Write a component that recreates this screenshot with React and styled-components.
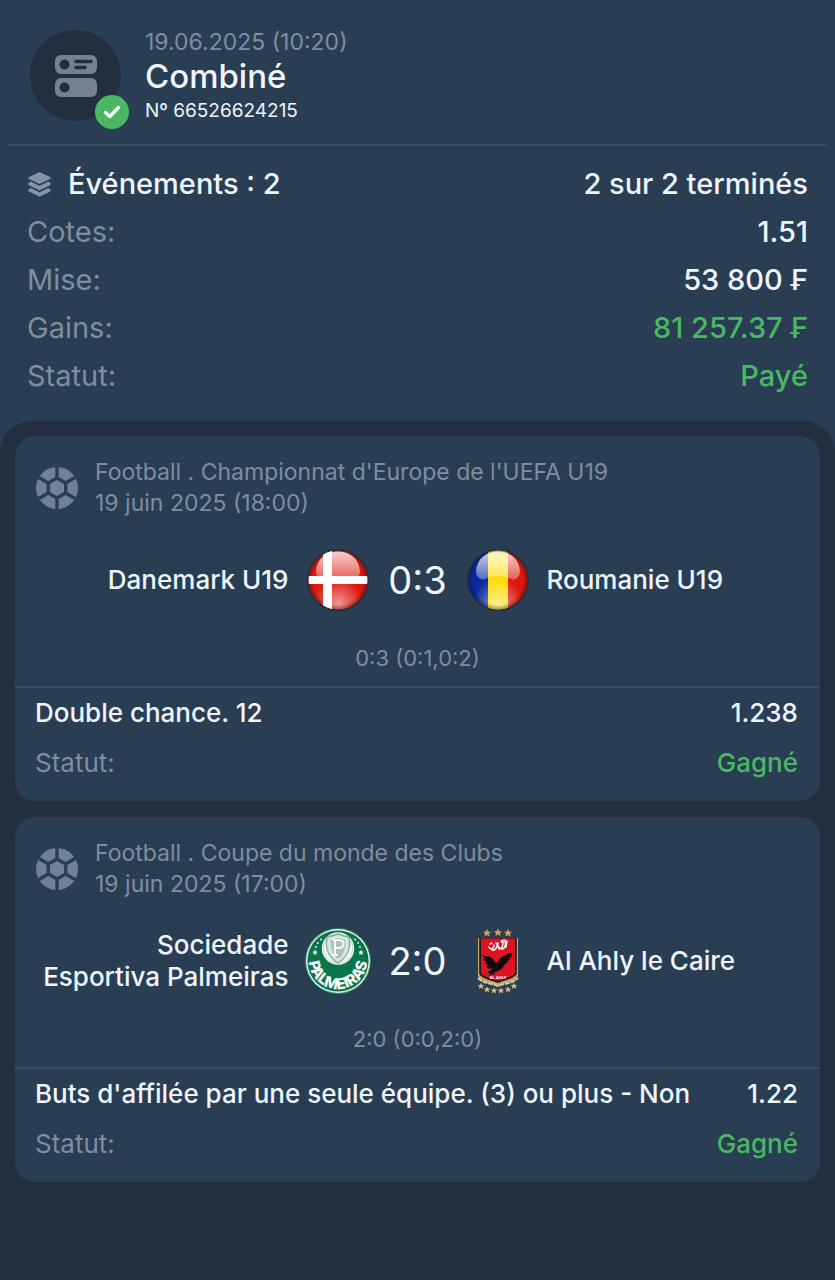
import React from 'react';
import styled, { createGlobalStyle } from 'styled-components';

const GlobalStyle = createGlobalStyle`
    * {
        box-sizing: border-box;
    }
    body {
        margin: 0;
        background: #232f3e;
        color: #eef5ff;
        font-family: Inter, 'Liberation Sans', sans-serif;
    }
    h1, h2, p, dl, dt, dd {
        margin: 0;
        font-weight: 400;
    }
`;

const Page = styled.main`
    min-height: 100vh;
    display: flex;
    flex-direction: column;
    background: #293d53;
`;
const Header = styled.header`
    display: flex;
    align-items: flex-start;
    gap: 24px;
    margin: 0 8px;
    padding: 26px 22px 16px;
    border-bottom: 2px solid #384d64;
`;
const TypeBadge = styled.div`
    position: relative;
    width: 91px;
    height: 91px;
    margin-top: 4px;
    display: flex;
    align-items: center;
    justify-content: center;
    border-radius: 50%;
    background: #232f3e;
`;
const CheckBadge = styled.span`
    position: absolute;
    right: -8px;
    bottom: -8px;
    width: 34px;
    height: 34px;
    display: flex;
    align-items: center;
    justify-content: center;
    border-radius: 50%;
    background: #4bb664;
`;
const HeaderDate = styled.p`
    color: #7f8da0;
    font-size: 23px;
    line-height: 32px;
`;
const HeaderTitle = styled.h1`
    && {
        font-weight: 500;
    }
    font-size: 33px;
    line-height: 36px;
`;
const HeaderNumber = styled.p`
    font-size: 19px;
    line-height: 34px;
`;
const Summary = styled.dl`
    padding: 14px 27px 21px;
    font-size: 29px;
    line-height: 48px;
`;
const SummaryRow = styled.div`
    display: flex;
    justify-content: space-between;
    dt {
        display: flex;
        align-items: center;
        gap: 16px;
        color: ${({ $strong }) => ($strong ? '#eef5ff' : '#7f8da0')};
        font-weight: ${({ $strong }) => ($strong ? 500 : 400)};
    }
    dd {
        color: ${({ $green }) => ($green ? '#4bb664' : '#eef5ff')};
        font-weight: 500;
    }
`;
const EventList = styled.section`
    flex: 1;
    display: flex;
    flex-direction: column;
    gap: 16px;
    padding: 15px 15px 32px;
    border-radius: 32px 32px 0 0;
    background: #232f3e;
`;
const Card = styled.article`
    padding: 21px 0 13px;
    border-radius: 20px;
    background: #293d53;
`;
const CardHead = styled.div`
    display: flex;
    align-items: center;
    gap: 16px;
    padding: 0 20px;
    color: #7f8da0;
    font-size: 23px;
    line-height: 31px;
`;
const Match = styled.div`
    display: grid;
    grid-template-columns: 1fr 66px 94px 66px 1fr;
    align-items: center;
    margin-top: 28px;
    padding: 0 8px;
    min-height: 66px;
`;
const Team = styled.h2`
    && {
        font-weight: 500;
    }
    padding: 0 16px;
    font-size: 26px;
    line-height: 32px;
    text-align: ${({ $side }) => ($side === 'home' ? 'right' : 'left')};
`;
const Score = styled.p`
    font-size: 38px;
    line-height: 48px;
    text-align: center;
`;
const Periods = styled.p`
    padding: 29px 20px 12px;
    border-bottom: 2px solid #384d64;
    color: #7f8da0;
    font-size: 22px;
    line-height: 32px;
    text-align: center;
`;
const BetRow = styled.div`
    display: flex;
    justify-content: space-between;
    padding: 0 22px 0 20px;
    font-size: 26px;
    line-height: 50px;
    dt {
        color: ${({ $muted }) => ($muted ? '#7f8da0' : '#eef5ff')};
        font-weight: ${({ $muted }) => ($muted ? 400 : 500)};
    }
    dd {
        color: ${({ $green }) => ($green ? '#4bb664' : '#eef5ff')};
        font-weight: 500;
    }
`;

const ComboIcon = () => (
    <svg width="42" height="42" viewBox="0 0 42 42" aria-hidden="true">
        <rect width="42" height="19" rx="6" fill="#748191" />
        <rect y="23" width="42" height="19" rx="6" fill="#748191" />
        <circle cx="9.5" cy="9.5" r="5" fill="#232f3e" />
        <circle cx="9.5" cy="32.5" r="5" fill="#232f3e" />
        <path
            d="M21 6.5H36M21 12.5H30"
            stroke="#232f3e"
            strokeWidth="3.6"
            strokeLinecap="round"
        />
    </svg>
);

const CheckIcon = () => (
    <svg width="18" height="14" viewBox="0 0 18 14" aria-hidden="true">
        <path
            d="M2.5 7.5L6.8 11.5L15.5 2.5"
            fill="none"
            stroke="#fff"
            strokeWidth="3.4"
            strokeLinecap="round"
            strokeLinejoin="round"
        />
    </svg>
);

const LayersIcon = () => (
    <svg width="25" height="25" viewBox="0 0 25 25" aria-hidden="true">
        <g fill="#8794a7" stroke="#8794a7" strokeLinejoin="round">
            <path d="M12.5 1L23 6L12.5 11L2 6Z" strokeWidth="1.8" />
            <path
                d="M2 11.3L4 10.4L12.5 14.5L21 10.4L23 11.3L23 12.6L12.5 17.6L2 12.6Z"
                strokeWidth="1.2"
            />
            <path
                d="M2 17.8L4 16.9L12.5 21L21 16.9L23 17.8L23 19L12.5 24L2 19Z"
                strokeWidth="1.2"
            />
        </g>
    </svg>
);

const BallIcon = () => (
    <svg width="44" height="44" viewBox="0 0 44 44" aria-hidden="true">
        <circle cx="22" cy="22" r="21" fill="#718096" />
        <g stroke="#293d53" strokeWidth="3.4" strokeLinejoin="round">
            <path
                d="M22 0V12M22 32V44M13.3 17L4 11.5M30.7 17L40 11.5M13.3 27L4 32.5M30.7 27L40 32.5"
                fill="none"
            />
            <path d="M22 12L30.7 17V27L22 32L13.3 27V17Z" fill="#718096" />
        </g>
    </svg>
);

const FlagGloss = ({ id }) => (
    <>
        <defs>
            <linearGradient id={`${id}-top`} x1="0" y1="0" x2="0" y2="1">
                <stop offset="0" stopColor="#fff" stopOpacity="0.8" />
                <stop offset="1" stopColor="#fff" stopOpacity="0.3" />
            </linearGradient>
            <radialGradient id={`${id}-low`} cx="0.5" cy="0.9" r="0.42">
                <stop offset="0" stopColor="#fff" stopOpacity="0.55" />
                <stop offset="1" stopColor="#fff" stopOpacity="0" />
            </radialGradient>
            <radialGradient id={`${id}-rim`}>
                <stop offset="0.84" stopColor="#000" stopOpacity="0" />
                <stop offset="1" stopColor="#000" stopOpacity="0.35" />
            </radialGradient>
        </defs>
        <circle cx="33" cy="33" r="29.5" fill={`url(#${id}-low)`} />
        <circle cx="33" cy="33" r="29.5" fill={`url(#${id}-rim)`} />
        <path
            d="M11 24C12 11 22 4.5 33 4.5S54 11 55 24C55 30 50 34 46 32C38 28 28 28 20 32C16 34 11 30 11 24Z"
            fill={`url(#${id}-top)`}
        />
    </>
);

const DenmarkFlag = () => (
    <svg width="66" height="66" viewBox="0 0 66 66" role="img" aria-label="Danemark">
        <clipPath id="dk-clip">
            <circle cx="33" cy="33" r="29.5" />
        </clipPath>
        <circle cx="33" cy="33" r="31" fill="#1b2430" opacity="0.6" />
        <g clipPath="url(#dk-clip)">
            <rect width="66" height="66" fill="#dc1a10" />
            <path d="M18 0H27V66H18ZM0 29H66V37H0Z" fill="#fff" />
            <FlagGloss id="dk" />
            <path d="M18 4H27V62H18ZM4 29H62V37H4Z" fill="#fff" opacity="0.8" />
        </g>
    </svg>
);

const RomaniaFlag = () => (
    <svg width="66" height="66" viewBox="0 0 66 66" role="img" aria-label="Roumanie">
        <clipPath id="ro-clip">
            <circle cx="33" cy="33" r="29.5" />
        </clipPath>
        <circle cx="33" cy="33" r="31" fill="#1b2430" opacity="0.6" />
        <g clipPath="url(#ro-clip)">
            <rect width="23" height="66" fill="#0a2ba0" />
            <rect x="23" width="20" height="66" fill="#fbdc05" />
            <rect x="43" width="23" height="66" fill="#dc1a10" />
            <FlagGloss id="ro" />
        </g>
    </svg>
);

const PalmeirasCrest = () => (
    <svg width="66" height="66" viewBox="0 0 66 66" role="img" aria-label="Palmeiras">
        <circle cx="33" cy="33" r="33" fill="#2f8563" />
        <circle cx="33" cy="33" r="32" fill="#e8f3ec" />
        <circle cx="33" cy="33" r="30.6" fill="#08754b" />
        <circle cx="33" cy="20.5" r="16.2" fill="#f2f7f4" />
        <circle cx="33" cy="20.5" r="14.8" fill="none" stroke="#c3dacd" strokeWidth="1" />
        <path
            d="M22 9L27 8L33 6L39 8L44 9C46 19 43 29 33 35C23 29 20 19 22 9Z"
            fill="#d3e2da"
            stroke="#86aa99"
            strokeWidth="1.4"
        />
        <path
            d="M25 11L33 9L41 11C42 19 40 27 33 31.5C26 27 24 19 25 11Z"
            fill="#a9c5b8"
            stroke="#f2f7f4"
            strokeWidth="1"
        />
        <path
            d="M30 12V27M27.5 12H34C40 12 40 20 34 20H30M27.5 27H33"
            fill="none"
            stroke="#f4faf7"
            strokeWidth="2"
        />
        <g fill="#fff">
            <circle cx="16" cy="11.5" r="0.9" />
            <circle cx="12.8" cy="15" r="0.9" />
            <circle cx="50" cy="11.5" r="0.9" />
            <circle cx="53.2" cy="15" r="0.9" />
            <circle cx="11" cy="19" r="0.9" />
            <circle cx="55" cy="19" r="0.9" />
            <path d="M10 21.6L10.8 23.6L12.8 23.7L11.2 25L11.8 27L10 25.9L8.2 27L8.8 25L7.2 23.7L9.2 23.6Z" />
            <path d="M56 21.6L56.8 23.6L58.8 23.7L57.2 25L57.8 27L56 25.9L54.2 27L54.8 25L53.2 23.7L55.2 23.6Z" />
        </g>
        <path id="palm-arc" d="M4.4 26A29.2 29.2 0 1 0 61.6 26" fill="none" />
        <text
            fill="#fff"
            fontFamily="Inter, sans-serif"
            fontSize="15"
            fontWeight="800"
            textAnchor="middle"
        >
            <textPath href="#palm-arc" startOffset="50%">
                PALMEIRAS
            </textPath>
        </text>
    </svg>
);

const STAR = 'M0 -4.2L1.2 -1.3L4.2 -1.2L1.9 0.7L2.7 3.6L0 1.9L-2.7 3.6L-1.9 0.7L-4.2 -1.2L-1.2 -1.3Z';
const TOP_STARS = [
    [22, 5],
    [33, 4.5],
    [43, 5],
];
const LOW_STARS = [
    [16, 58],
    [22, 61.5],
    [29, 62.5],
    [36, 62.5],
    [43, 61.5],
    [49, 58],
];

const AlAhlyCrest = () => (
    <svg width="66" height="66" viewBox="0 0 66 66" role="img" aria-label="Al Ahly">
        {TOP_STARS.map(([x, y]) => (
            <path key={x} d={STAR} transform={`translate(${x} ${y})`} fill="#cda260" />
        ))}
        <path d="M13 10H53V48C50 54 42 54 33 58C24 54 16 54 13 48Z" fill="#c8a468" />
        <path d="M14.2 10H51.8V46C49 51 40 52 33 55C26 52 17 51 14.2 46Z" fill="#1d1a1e" />
        <path d="M16 10.5H50V45C47 50 39 50 33 53C27 50 19 50 16 45Z" fill="#dc1422" />
        <path
            d="M24 19C25 22 29 21 29 17M27 22C30 23 32 20 33 15M31 15L35 21M34 21C38 21 38 17 38 12M37 21C40 21 41 17 40 12M36 13L38 15M25 16L27 15M41 19L42 13"
            fill="none"
            stroke="#fff"
            strokeWidth="1.5"
            strokeLinecap="round"
        />
        <path
            d="M16 26L19 28L22 28L25 29L28 31L30 34L32 35C34 31 36 29 39 28L45 25L48 26L45 28L47 28L44 31L45 31L42 34L43 34L39 37C38 40 36 42 33 43L30 44L29 46L31 47L27 46L24 48L25 45L22 45L26 42L28 40L24 41L21 38L24 38L20 35L22 35L18 31L20 31Z"
            fill="#0e0c10"
        />
        <text
            x="33"
            y="51"
            fill="#fff"
            fontFamily="Inter, sans-serif"
            fontSize="4"
            fontWeight="700"
            textAnchor="middle"
        >
            AL AHLY
        </text>
        <path
            d="M13 50C19 56 27 55 33 58C39 55 47 56 53 50"
            fill="none"
            stroke="#d9c9a0"
            strokeWidth="2.2"
            strokeDasharray="5 0.8"
        />
        {LOW_STARS.map(([x, y]) => (
            <path
                key={x}
                d={STAR}
                transform={`translate(${x} ${y}) scale(0.8)`}
                fill="#d5bd86"
            />
        ))}
    </svg>
);

const summary = [
    { label: 'Cotes:', value: '1.51' },
    { label: 'Mise:', value: '53 800 ₣' },
    { label: 'Gains:', value: '81 257.37 ₣', green: true },
    { label: 'Statut:', value: 'Payé', green: true },
];

const events = [
    {
        id: 1,
        league: "Football . Championnat d'Europe de l'UEFA U19",
        date: '19 juin 2025 (18:00)',
        home: 'Danemark U19',
        away: 'Roumanie U19',
        HomeLogo: DenmarkFlag,
        AwayLogo: RomaniaFlag,
        score: '0:3',
        periods: '0:3 (0:1,0:2)',
        bet: 'Double chance. 12',
        odds: '1.238',
        status: 'Gagné',
    },
    {
        id: 2,
        league: 'Football . Coupe du monde des Clubs',
        date: '19 juin 2025 (17:00)',
        home: 'Sociedade Esportiva Palmeiras',
        away: 'Al Ahly le Caire',
        HomeLogo: PalmeirasCrest,
        AwayLogo: AlAhlyCrest,
        score: '2:0',
        periods: '2:0 (0:0,2:0)',
        bet: "Buts d'affilée par une seule équipe. (3) ou plus - Non",
        odds: '1.22',
        status: 'Gagné',
    },
];

const EventCard = ({ event }) => {
    const { league, date, home, away, HomeLogo, AwayLogo } = event;
    return (
        <Card>
            <CardHead>
                <BallIcon />
                <div>
                    <p>{league}</p>
                    <p>{date}</p>
                </div>
            </CardHead>
            <Match>
                <Team $side="home">{home}</Team>
                <HomeLogo />
                <Score>{event.score}</Score>
                <AwayLogo />
                <Team $side="away">{away}</Team>
            </Match>
            <Periods>{event.periods}</Periods>
            <dl>
                <BetRow>
                    <dt>{event.bet}</dt>
                    <dd>{event.odds}</dd>
                </BetRow>
                <BetRow $muted $green>
                    <dt>Statut:</dt>
                    <dd>{event.status}</dd>
                </BetRow>
            </dl>
        </Card>
    );
};

const App = () => (
    <>
        <GlobalStyle />
        <Page>
            <Header>
                <TypeBadge>
                    <ComboIcon />
                    <CheckBadge>
                        <CheckIcon />
                    </CheckBadge>
                </TypeBadge>
                <div>
                    <HeaderDate>19.06.2025 (10:20)</HeaderDate>
                    <HeaderTitle>Combiné</HeaderTitle>
                    <HeaderNumber>Nº 66526624215</HeaderNumber>
                </div>
            </Header>
            <Summary>
                <SummaryRow $strong>
                    <dt>
                        <LayersIcon />
                        Événements : 2
                    </dt>
                    <dd>2 sur 2 terminés</dd>
                </SummaryRow>
                {summary.map(({ label, value, green }) => (
                    <SummaryRow key={label} $green={green}>
                        <dt>{label}</dt>
                        <dd>{value}</dd>
                    </SummaryRow>
                ))}
            </Summary>
            <EventList>
                {events.map((event) => (
                    <EventCard key={event.id} event={event} />
                ))}
            </EventList>
        </Page>
    </>
);

export default App;
